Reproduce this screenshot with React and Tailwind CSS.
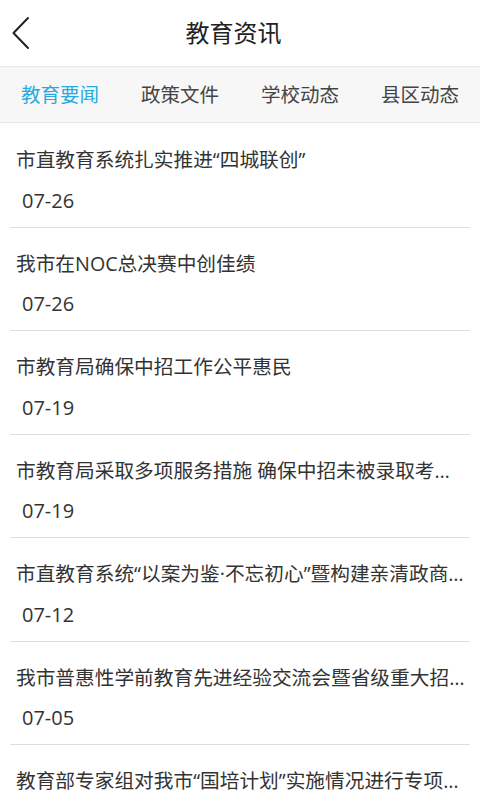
import { useState } from "react";

const tabs = ["教育要闻", "政策文件", "学校动态", "县区动态"];

const news = [
  { title: "市直教育系统扎实推进“四城联创”", date: "07-26" },
  { title: "我市在NOC总决赛中创佳绩", date: "07-26" },
  { title: "市教育局确保中招工作公平惠民", date: "07-19" },
  { title: "市教育局采取多项服务措施 确保中招未被录取考生有学上", date: "07-19" },
  { title: "市直教育系统“以案为鉴·不忘初心”暨构建亲清政商关系警示教育大会召开", date: "07-12" },
  { title: "我市普惠性学前教育先进经验交流会暨省级重大招标课题开题会召开", date: "07-05" },
  { title: "教育部专家组对我市“国培计划”实施情况进行专项督导", date: "07-03" },
];

export default function App() {
  const [active, setActive] = useState(0);

  return (
    <div className="w-[480px] h-[800px] overflow-hidden bg-white font-['Open_Sans','Noto_Sans_CJK_SC',sans-serif] text-[#333]">
      <div className="relative h-[66px] flex items-center justify-center pr-[13px] bg-white">
        <button className="absolute left-0 top-0 h-[66px] w-[42px] flex items-center justify-center">
          <svg width="18" height="34" viewBox="0 0 18 34" fill="none">
            <path d="M16 2 L1.5 17 L16 32" stroke="#222" strokeWidth="2" strokeLinecap="round" strokeLinejoin="round" />
          </svg>
        </button>
        <h1 className="text-[24px] text-[#222] leading-none">教育资讯</h1>
      </div>

      <div className="grid grid-cols-4 h-[57px] bg-[#f7f7f7] border-y border-[#e6e6e6]">
        {tabs.map((t, i) => (
          <button
            key={t}
            onClick={() => setActive(i)}
            className={
              i === active
                ? "text-[19.5px] text-[#29a9e1] flex items-center justify-center"
                : "text-[19.5px] text-[#444] flex items-center justify-center"
            }
          >
            {t}
          </button>
        ))}
      </div>

      <div className="pt-[1px]">
        {news.map((n, i) => (
          <div key={i} className="mx-[10px] border-b border-[#dedede] pt-[22px] pb-[12px]">
            <p className="pl-[6px] mr-[1px] text-[19.7px] leading-[28px] truncate">{n.title}</p>
            <p className="pl-[12px] mt-[12.5px] text-[20px] leading-[28px]">{n.date}</p>
          </div>
        ))}
      </div>
    </div>
  );
}
